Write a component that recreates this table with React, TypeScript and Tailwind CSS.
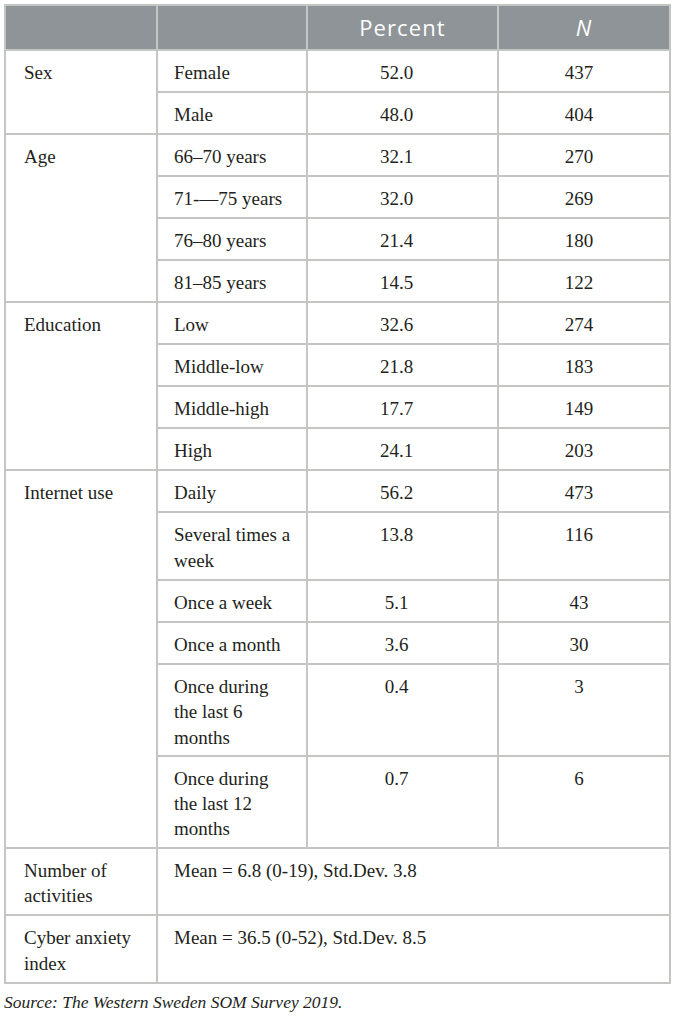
type Row = {
  group?: string;
  span?: number;
  label: React.ReactNode;
  pct: string;
  n: string;
  tight?: boolean;
};

const rows: Row[] = [
  { group: "Sex", span: 2, label: "Female", pct: "52.0", n: "437" },
  { label: "Male", pct: "48.0", n: "404" },
  { group: "Age", span: 4, label: "66–70 years", pct: "32.1", n: "270" },
  { label: "71-—75 years", pct: "32.0", n: "269" },
  { label: "76–80 years", pct: "21.4", n: "180" },
  { label: "81–85 years", pct: "14.5", n: "122" },
  { group: "Education", span: 4, label: "Low", pct: "32.6", n: "274" },
  { label: "Middle-low", pct: "21.8", n: "183" },
  { label: "Middle-high", pct: "17.7", n: "149" },
  { label: "High", pct: "24.1", n: "203" },
  { group: "Internet use", span: 6, label: "Daily", pct: "56.2", n: "473" },
  { label: <>Several times a<br />week</>, pct: "13.8", n: "116" },
  { label: "Once a week", pct: "5.1", n: "43" },
  { label: "Once a month", pct: "3.6", n: "30" },
  { label: <>Once during<br />the last 6<br />months</>, pct: "0.4", n: "3", tight: true },
  { label: <>Once during<br />the last 12<br />months</>, pct: "0.7", n: "6", tight: true },
];

const base = "border-2 border-[#c3c6c3] align-top pt-[9px] pb-[5px]";
const cell = `${base} leading-[26px]`;

export default function App() {
  return (
    <div className="min-h-screen bg-white pl-[4px] pt-[4px] font-['Liberation_Serif',serif] text-[19px] text-[#231f20]">
      <table className="w-[665px] table-fixed border-collapse">
        <colgroup>
          <col className="w-[152px]" />
          <col className="w-[150px]" />
          <col className="w-[191px]" />
          <col className="w-[172px]" />
        </colgroup>
        <thead>
          <tr className="bg-[#8e9497] text-white font-['Open_Sans',sans-serif] text-[22px] tracking-[0.05em]">
            <th className="border-2 border-[#c3c6c3] h-[45px] p-0" />
            <th className="border-2 border-[#c3c6c3] p-0" />
            <th className="border-2 border-[#c3c6c3] p-0 font-medium">Percent</th>
            <th className="border-2 border-[#c3c6c3] p-0 font-medium italic">N</th>
          </tr>
        </thead>
        <tbody>
          {rows.map((r, i) => (
            <tr key={i}>
              {r.group && (
                <td rowSpan={r.span} className={`${cell} pl-[18px]`}>
                  {r.group}
                </td>
              )}
              <td className={`${r.tight ? `${base} leading-[25.3px]` : cell} pl-[16px]`}>{r.label}</td>
              <td className={`${cell} text-center pr-[12px]`}>{r.pct}</td>
              <td className={`${cell} text-center pr-[10px]`}>{r.n}</td>
            </tr>
          ))}
          <tr>
            <td className={`${base} leading-[25.5px] pl-[18px]`}>
              Number of
              <br />
              activities
            </td>
            <td colSpan={3} className={`${cell} pl-[16px]`}>
              Mean = 6.8 (0-19), Std.Dev. 3.8
            </td>
          </tr>
          <tr>
            <td className={`${cell} pl-[18px]`}>
              Cyber anxiety
              <br />
              index
            </td>
            <td colSpan={3} className={`${cell} pl-[16px]`}>
              Mean = 36.5 (0-52), Std.Dev. 8.5
            </td>
          </tr>
        </tbody>
      </table>
      <p className="mt-[5px] italic text-[17.5px] text-[#231f20]">Source: The Western Sweden SOM Survey 2019.</p>
    </div>
  );
}
